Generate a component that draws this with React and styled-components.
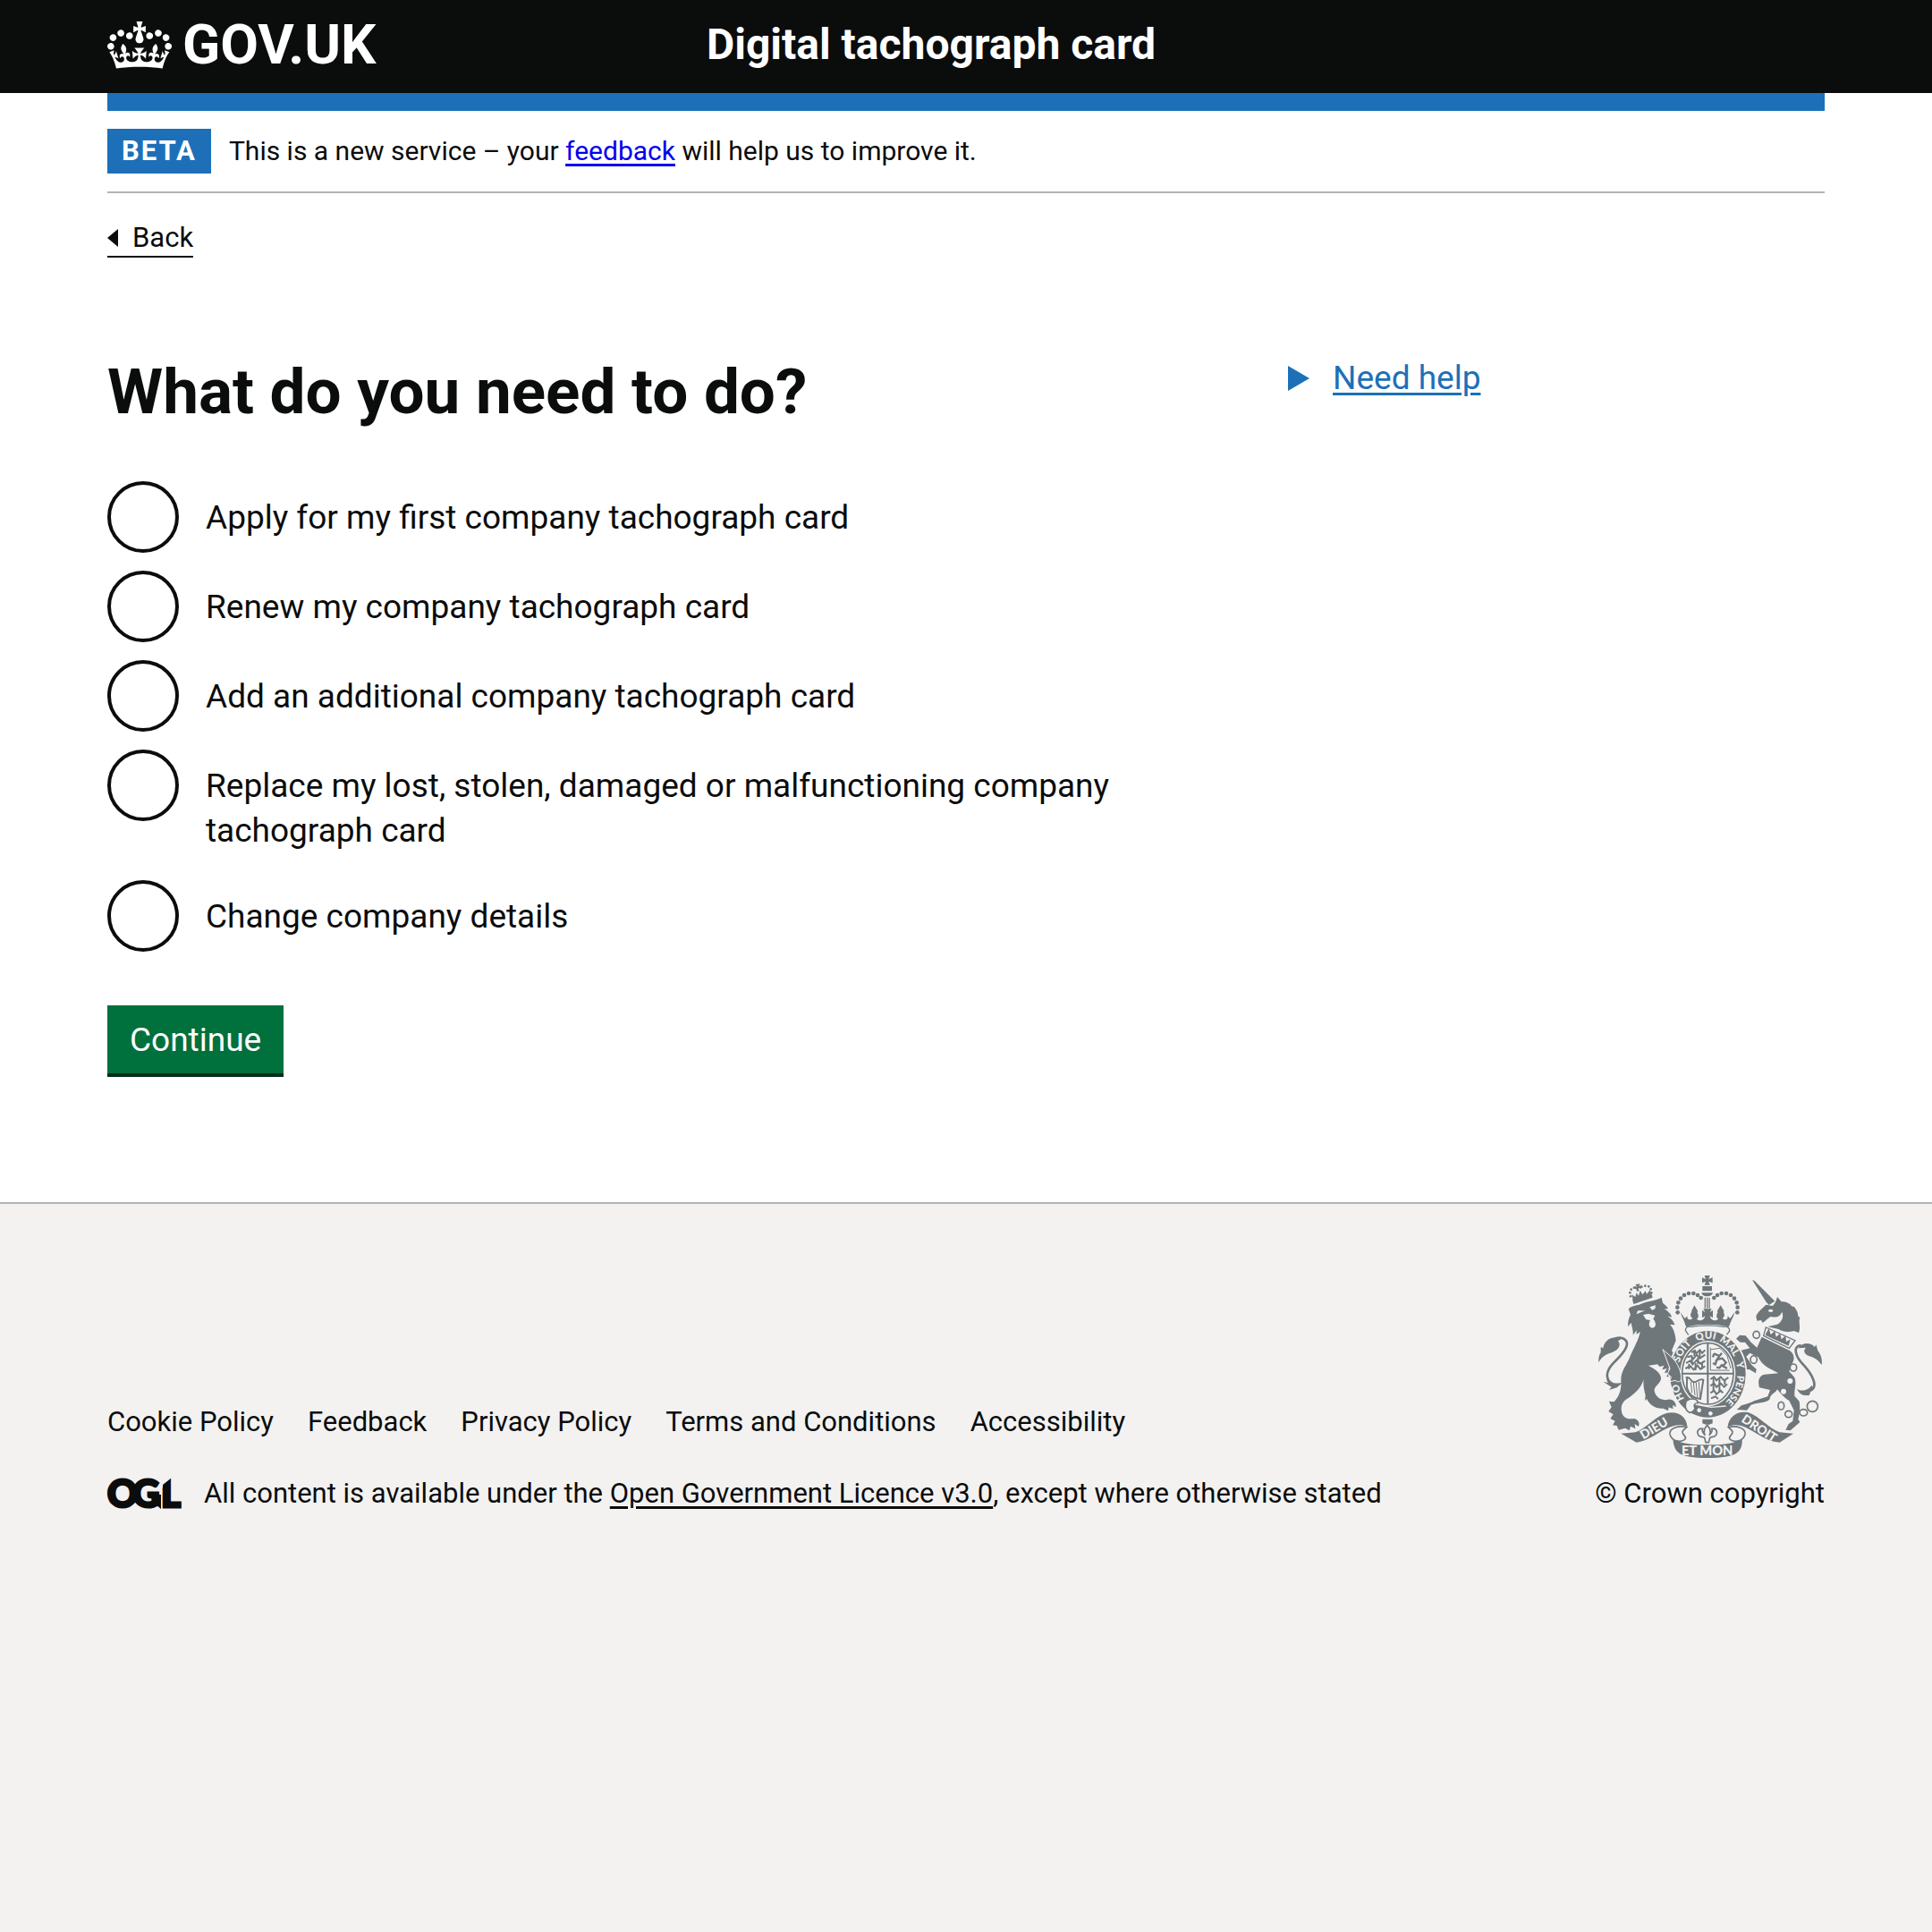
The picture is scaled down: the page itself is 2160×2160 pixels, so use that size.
import React from "react";
import styled, { createGlobalStyle } from "styled-components";

const ink = "#0b0c0c";
const blue = "#1d70b8";
const rule = "#b1b4b6";
const footerGrey = "#f3f2f1";
const armsGrey = "#6f777b";

const GlobalStyle = createGlobalStyle`
  *, *::before, *::after { box-sizing: border-box; }
  html { background: ${footerGrey}; }
  body {
    margin: 0;
    background: #fff;
    color: ${ink};
    font-family: Roboto, "Liberation Sans", Arial, sans-serif;
    font-size: 31px;
    line-height: 40px;
  }
`;

const Container = styled.div`
  width: min(100% - 120px, 1920px);
  margin: 0 auto;
`;

const Header = styled.header`
  background: ${ink};
  color: #fff;
`;
const HeaderRow = styled(Container)`
  display: flex;
  align-items: center;
  gap: 30px;
  min-height: 104px;
  padding-bottom: 4px;
`;
const LogoLink = styled.a`
  flex: 0 0 calc(100% / 3);
  display: flex;
  align-items: center;
  gap: 12px;
  color: inherit;
  text-decoration: none;
  font-size: 62px;
  line-height: 60px;
  font-weight: 700;
`;
const ServiceName = styled.a`
  color: inherit;
  text-decoration: none;
  font-size: 48px;
  line-height: 60px;
  font-weight: 700;
`;
const BlueBar = styled.div`
  height: 20px;
  background: ${blue};
`;

const PhaseBanner = styled.div`
  display: flex;
  align-items: center;
  gap: 20px;
  padding: 20px 0;
  border-bottom: 2px solid ${rule};
`;
const Tag = styled.strong`
  padding: 5px 16px;
  background: ${blue};
  color: #fff;
  font-weight: 700;
  letter-spacing: 2px;
`;
const PhaseText = styled.p`
  margin: 0;
  font-size: 30px;
`;
const PhaseLink = styled.a`
  color: #0000ee;
  text-decoration-thickness: 3px;
  text-underline-offset: 4px;
  text-decoration-skip-ink: none;
`;

const BackLink = styled.a`
  display: inline-flex;
  align-items: center;
  gap: 16px;
  margin-top: 30px;
  border-bottom: 2px solid ${ink};
  color: ${ink};
  text-decoration: none;
`;

const Main = styled.main`
  display: grid;
  grid-template-columns: repeat(3, minmax(0, 1fr));
  gap: 60px;
  padding: 110px 0 140px;
`;
const Question = styled.form`
  grid-column: span 2;
`;
const Fieldset = styled.fieldset`
  margin: 0;
  padding: 0;
  border: 0;
`;
const Legend = styled.legend`
  padding: 0;
  margin-bottom: 60px;
`;
const Title = styled.h1`
  margin: 0;
  font-size: 71px;
  line-height: 80px;
  font-weight: 700;
`;
const Options = styled.div`
  display: flex;
  flex-direction: column;
  gap: 20px;
`;
const Option = styled.div`
  display: flex;
  align-items: flex-start;
  gap: 30px;
  max-width: 1160px;
`;
const Radio = styled.input`
  appearance: none;
  flex: none;
  width: 80px;
  height: 80px;
  margin: 0;
  border: 4px solid ${ink};
  border-radius: 50%;
  background: #fff;
  &:checked { box-shadow: inset 0 0 0 16px #fff, inset 0 0 0 40px ${ink}; }
`;
const OptionLabel = styled.label`
  padding: 16px 0 10px;
  font-size: 37px;
  line-height: 50px;
`;
const Submit = styled.button`
  display: block;
  margin-top: 60px;
  padding: 14px 25px 12px;
  border: 0;
  border-bottom: 4px solid #002d18;
  background: #00703c;
  color: #fff;
  font: inherit;
  font-size: 37px;
  line-height: 50px;
`;

const Help = styled.details`
  color: ${blue};
`;
const HelpSummary = styled.summary`
  display: flex;
  align-items: center;
  gap: 26px;
  list-style: none;
  font-size: 37px;
  line-height: 50px;
  cursor: pointer;
  &::-webkit-details-marker { display: none; }
`;
const HelpText = styled.span`
  text-decoration: underline;
  text-decoration-thickness: 3px;
  text-underline-offset: 4px;
`;

const Footer = styled.footer`
  padding: 80px 0 60px;
  border-top: 2px solid ${rule};
  background: ${footerGrey};
`;
const FooterRow = styled(Container)`
  display: flex;
  align-items: flex-end;
  justify-content: space-between;
  gap: 60px;
`;
const FooterLinks = styled.ul`
  display: flex;
  flex-wrap: wrap;
  gap: 20px 38px;
  margin: 0 0 40px;
  padding: 0;
  list-style: none;
`;
const FooterLink = styled.a`
  color: ${ink};
  text-decoration: ${(p) => (p.$underlined ? "underline" : "none")};
  text-decoration-thickness: 3px;
  text-underline-offset: 4px;
`;
const Licence = styled.div`
  display: flex;
  align-items: center;
  gap: 26px;
`;
const Copyright = styled.a`
  display: flex;
  flex-direction: column;
  align-items: center;
  gap: 20px;
  color: ${ink};
  text-decoration: none;
  white-space: nowrap;
`;

function Crown() {
  return (
    <svg width="72" height="53" viewBox="0 0 132 97" aria-hidden="true">
      <path
        fill="currentColor"
        fillRule="evenodd"
        d="M25 30.2c3.5 1.5 7.7-.2 9.1-3.7 1.5-3.6-.2-7.8-3.9-9.2-3.6-1.4-7.6.3-9.1 3.9-1.4 3.5.3 7.5 3.9 9zM9 39.5c3.6 1.5 7.8-.2 9.2-3.7 1.5-3.6-.2-7.8-3.9-9.1-3.6-1.5-7.6.2-9.1 3.8-1.4 3.5.3 7.5 3.8 9zM4.4 57.2c3.5 1.5 7.7-.2 9.1-3.8 1.5-3.6-.2-7.7-3.9-9.1-3.5-1.5-7.6.3-9.1 3.8-1.4 3.5.3 7.6 3.9 9.1zm38.3-21.4c3.5 1.5 7.7-.2 9.1-3.8 1.5-3.6-.2-7.7-3.9-9.1-3.6-1.5-7.6.3-9.1 3.8-1.3 3.6.4 7.7 3.9 9.1zm64.4-5.6c-3.6 1.5-7.8-.2-9.1-3.7-1.5-3.6.2-7.8 3.8-9.2 3.6-1.4 7.7.3 9.2 3.9 1.3 3.5-.4 7.5-3.9 9zm15.9 9.3c-3.6 1.5-7.7-.2-9.1-3.7-1.5-3.6.2-7.8 3.7-9.1 3.6-1.5 7.7.2 9.2 3.8 1.5 3.5-.3 7.5-3.8 9zm4.7 17.7c-3.6 1.5-7.8-.2-9.2-3.8-1.5-3.6.2-7.7 3.9-9.1 3.6-1.5 7.7.3 9.2 3.8 1.3 3.5-.4 7.6-3.9 9.1zM89.3 35.8c-3.6 1.5-7.8-.2-9.2-3.8-1.4-3.6.2-7.7 3.9-9.1 3.6-1.5 7.7.3 9.2 3.8 1.4 3.6-.3 7.7-3.9 9.1zM69.7 17.7l8.9 4.7V9.3l-8.9 2.8c-.2-.3-.5-.6-.9-.9L72.4 0H59.6l3.5 11.2c-.3.3-.6.5-.9.9l-8.8-2.8v13.1l8.8-4.7c.3.3.6.7.9.9l-5 15.4v.1c-.2.8-.4 1.6-.4 2.4 0 4.1 3.1 7.5 7 8.1h.2c.3 0 .7.1 1 .1.4 0 .7 0 1-.1h.2c4-.6 7.1-4.1 7.1-8.1 0-.8-.1-1.7-.4-2.4V34l-5.1-15.4c.4-.2.7-.6 1-.9zM66 92.8c16.9 0 32.8 1.1 47.1 3.2 4-16.9 8.9-26.7 14-33.5l-9.6-3.4c1 4.9 1.1 7.2 0 10.2-1.5-1.4-3-4.3-4.2-8.7L108.6 76c2.8-2 5-3.2 7.5-3.3-4.4 9.4-10 11.9-13.6 11.2-4.3-.8-6.3-4.6-5.6-7.9 1-4.7 5.7-5.9 8-.5 4.3-8.7-3-11.4-7.6-8.8 7.1-7.2 7.9-13.5 2.1-21.1-8 6.1-8.1 12.3-4.5 20.8-4.7-5.4-12.1-2.5-9.5 6.2 3.4-5.2 7.9-2 7.2 3.1-.6 4.3-6.4 7.8-13.5 7.2-10.3-.9-10.9-8-11.2-13.8 2.5-.5 7.1 1.8 11 7.3L80.2 60c-4.1 4.4-8 5.3-12.3 5.4 1.4-4.4 8-11.6 8-11.6H55.5s6.4 7.2 7.9 11.6c-4.2-.1-8-1-12.3-5.4l1.4 16.4c3.9-5.5 8.5-7.7 10.9-7.3-.3 5.8-.9 12.8-11.1 13.8-7.2.6-12.9-2.9-13.5-7.2-.7-5 3.8-8.3 7.1-3.1 2.7-8.7-4.6-11.6-9.4-6.2 3.7-8.5 3.6-14.7-4.6-20.8-5.8 7.6-5 13.9 2.2 21.1-4.7-2.6-11.9.1-7.7 8.8 2.3-5.5 7.1-4.2 8.1.5.7 3.3-1.3 7.1-5.7 7.9-3.5.7-9-1.8-13.5-11.2 2.5.1 4.7 1.3 7.5 3.3l-4.7-15.4c-1.2 4.4-2.7 7.2-4.3 8.7-1.1-3-.9-5.3 0-10.2l-9.5 3.4c5 6.9 9.9 16.7 14 33.5 14.8-2.1 30.8-3.2 47.7-3.2z"
      />
    </svg>
  );
}

function OglLogo() {
  return (
    <svg width="82" height="34" viewBox="0 0 82 34" overflow="visible" role="img" aria-label="Open Government Licence">
      <text
        x="0 28 60"
        y="32"
        fontFamily="Lato, sans-serif"
        fontWeight="900"
        fontSize="42"
        fill={ink}
        stroke={ink}
        strokeWidth="3"
      >
        OGL
      </text>
      <path d="M61-1H72L62 7V10H61Z" fill={footerGrey} />
      <path d="M48 18H60V34L54 29Z" fill={ink} />
    </svg>
  );
}

const crownPearls = [
  [338, 172], [337, 155], [340, 139], [348, 125], [360, 114], [375, 108], [391, 108], [405, 114], [416, 123],
];
const smallPearls = [
  [180, 118], [178, 106], [182, 95], [192, 89], [202, 92], [217, 86], [229, 83], [241, 85], [248, 94], [250, 106],
];
const spots = [
  [715, 402, 9], [693, 437, 9],
];
const bubbles = [
  [602, 247, 11, 12], [593, 330, 11, 13], [726, 357, 11, 12], [685, 485, 10, 13], [710, 513, 12, 11], [760, 508, 13, 11], [790, 487, 18, 18],
];

function RoyalArms() {
  return (
    <svg width="250" height="204" viewBox="72 48 750 612" fill={armsGrey} role="img" aria-label="Royal coat of arms">
      <defs>
        <path id="garter-top" d="M339 378 A100 118 0 0 1 539 378" />
        <path id="garter-right" d="M537 366 A98 114 0 0 1 484 482" />
        <path id="garter-left" d="M372 476 A98 114 0 0 1 340 396" />
      </defs>

      {/* lion's tail */}
      <path d="M135 420C92 404 92 372 126 338C164 302 184 270 152 258C134 254 118 262 106 276" fill="none" stroke={armsGrey} strokeWidth="8" />
      <path d="M148 262C120 248 92 264 88 292L80 288L80 306C74 314 72 326 73 340C84 318 100 312 118 306C140 298 150 282 138 268Z" />
      <path d="M88 404L104 408L98 392C110 408 130 412 152 408L134 424L108 432L116 422Z" />

      {/* lion's crown */}
      <g>
        {smallPearls.map(([x, y]) => (
          <circle key={`${x}-${y}`} cx={x} cy={y} r="4" />
        ))}
        <path d="M186 128L250 108L254 122L190 144Z" />
        <path d="M188 130L184 112L196 120L200 106L207 116L212 98L220 112L230 100L234 110L246 96L248 116Z" />
        <path d="M196 78L212 76L208 84L216 82L216 92L206 90L208 100L200 102L203 91L195 94L194 84L202 86Z" />
      </g>

      {/* lion */}
      <path d="M173 160C186 148 200 150 214 144C240 132 262 134 284 122L288 140C298 148 304 154 306 160L294 160C304 168 316 176 318 188L304 184C314 192 326 202 328 214L312 212C322 222 330 240 332 266L318 300C332 318 344 348 348 380C356 396 346 408 332 404L318 410L322 398L308 402L312 388L300 388L308 374L294 374L302 360L286 364L292 350L278 354L270 346L240 350C266 364 284 378 282 396C278 412 258 420 260 436C264 456 284 470 306 464C322 462 334 474 332 490L322 482L322 496L308 490L306 502L290 494C264 496 244 482 234 462L228 468L230 450C224 430 222 410 224 396C216 424 196 444 168 462C148 474 146 496 152 512C160 530 178 530 194 528C208 534 212 546 206 554L194 546L196 562L180 554L176 568L162 560L140 566L134 552L120 550L128 536L112 528L122 514L106 504L116 490L108 470L124 472C136 460 150 440 148 404C146 366 168 350 180 316C190 290 208 264 212 236L200 246L200 232L188 248C190 232 184 222 182 206L172 220C170 204 174 190 180 180Z" />
      <g fill={footerGrey}>
        <path d="M200 178L228 166L204 166ZM244 154L264 148L262 160L252 164Z" />
        <path d="M222 180L240 176L262 182L256 194C266 204 268 222 252 224C238 220 242 206 246 198L232 196Z" />
      </g>

      {/* unicorn's tail */}
      <path d="M780 436C812 424 792 384 762 350C730 318 724 284 752 282" fill="none" stroke={armsGrey} strokeWidth="8" />
      <path d="M742 292C758 270 784 272 798 288L802 280L808 300C818 312 824 330 821 348C810 332 796 322 778 318C762 312 758 300 768 290Z" />
      <path d="M738 428C754 440 776 432 788 416L794 430L782 434C784 446 780 452 772 450C756 452 744 442 738 428Z" />

      {/* unicorn */}
      <path d="M588 63L596 66L664 134L644 147L634 136Z" />
      <path d="M601 186C604 172 620 160 634 146L656 150C664 144 668 134 672 120L686 136C704 136 714 142 722 152L728 152C736 162 742 172 742 184L748 190C742 204 752 222 744 240L728 234C706 240 690 236 676 228L640 220L672 212C690 202 694 184 688 170C680 188 668 190 650 186C640 190 632 204 622 206L618 198L604 200Z" />
      <ellipse cx="650" cy="166" rx="8" ry="5" fill={footerGrey} />
      <path d="M634 222L732 266L712 292L626 250Z" fill={footerGrey} stroke={armsGrey} strokeWidth="4" />
      <path d="M634 242L644 226L650 246L664 234L668 254L682 242L686 262L700 250L702 270L716 262L710 284L632 248Z" />
      <path d="M620 254L714 300C730 312 732 330 720 346L712 370L730 390C738 410 728 430 730 452L746 470C750 496 746 516 742 530L748 540L716 568L700 566L710 546L724 536L728 500L712 468C692 456 686 446 672 430C664 446 652 440 646 464C634 476 600 474 584 482L570 500L536 498L552 484C570 478 584 474 596 468L640 454L648 432L612 424C606 404 610 384 628 380L676 376L650 362C628 352 616 338 608 322L580 308L568 320L586 348L602 362L600 376L580 364L564 362L560 340L546 316L548 300L580 292L564 272L548 272L534 260L546 248L566 250L584 272L604 290Z" />
      {spots.map(([x, y, r]) => (
        <circle key={x} cx={x} cy={y} r={r} fill={footerGrey} />
      ))}
      {bubbles.map(([x, y, rx, ry]) => (
        <ellipse key={x} cx={x} cy={y} rx={rx} ry={ry} fill={footerGrey} stroke={armsGrey} strokeWidth="5" />
      ))}

      {/* royal crown */}
      <path d="M428 48H446L442 60L455 55V73L442 68L446 80H428L432 68L420 73V55L432 60Z" />
      <path d="M421 84H453V100H421ZM418 106H456C454 122 420 122 418 106Z" />
      <path d="M430 122V158M437 122V158M444 122V158" stroke={armsGrey} strokeWidth="4" />
      {crownPearls.map(([x, y]) => (
        <g key={`${x}-${y}`}>
          <circle cx={x} cy={y} r="7" />
          <circle cx={876 - x} cy={y} r="7" />
        </g>
      ))}
      <path d="M346 170L362 192L374 180C364 186 374 204 388 192C372 180 390 168 384 168L394 148L406 168C398 170 416 184 402 194C416 204 428 196 430 184L420 190V164L430 172L424 160H452L446 172L456 164V190L446 184C448 196 460 204 474 194C460 184 478 170 470 168L482 148L494 168C486 170 504 180 488 192C502 204 512 186 502 180L514 192L530 170C524 190 514 204 510 220C460 210 416 210 366 220C362 204 354 190 346 170Z" />
      <path d="M364 232C364 220 372 218 384 220C420 214 456 214 492 220C504 218 512 222 512 234L500 250L376 250Z" fill={footerGrey} stroke={armsGrey} strokeWidth="4" />

      {/* garter */}
      <ellipse cx="439" cy="378" rx="132" ry="150" fill={footerGrey} />
      <ellipse cx="439" cy="379" rx="127" ry="145" />
      <ellipse cx="439" cy="377" rx="93" ry="110" fill={footerGrey} />
      <ellipse cx="439" cy="377" rx="86" ry="103" fill="none" stroke={armsGrey} strokeWidth="5" />
      <path d="M439 276V478M352 377H526" stroke={armsGrey} strokeWidth="6" />
      <g fill="none" stroke={armsGrey} strokeWidth="6">
        <path d="M384 306L396 300L400 310L412 298L420 308L430 298M370 322L384 318L390 328L402 314L412 326L430 314M366 342L380 334L388 346L402 332L414 344L430 334M364 360L380 352L392 364L404 350L414 362L430 352" />
        <path d="M394 302V318M412 300V322M386 322V342M406 324V344M376 344V362M398 342V366M420 340V362" />
        <path d="M448 290V366H512M450 296L480 292L504 318L516 360" strokeWidth="3" />
        <path d="M460 310L478 318L470 330L488 326L500 340L490 352L504 360M460 310L456 322M478 318L486 308M470 330L464 346L456 342M488 346L478 358L468 356" strokeWidth="7" />
        <path d="M448 396L460 388L468 400L482 388L494 400L508 390M448 418L460 410L468 422L482 410L494 422L504 412M448 442L460 434L468 446L482 434L490 442M450 460L464 454L474 462" />
        <path d="M458 392V412M478 392V416M496 396V414M458 414V438M478 416V438" />
        <path d="M368 390C372 404 366 414 370 428C376 446 390 460 414 462L424 398C410 390 400 412 388 404C378 398 380 388 368 390Z" />
        <path d="M382 406L386 442M391 408L396 450M400 408L404 456M409 404L412 458" strokeWidth="3" />
      </g>
      <g fill={footerGrey} fontFamily="Lato, sans-serif" fontWeight="900" fontSize="34" textAnchor="middle">
        <text><textPath href="#garter-top" startOffset="22%">SOIT</textPath></text>
        <text><textPath href="#garter-top" startOffset="48%">QUI</textPath></text>
        <text><textPath href="#garter-top" startOffset="72%">MAL</textPath></text>
        <text><textPath href="#garter-top" startOffset="92%">Y</textPath></text>
        <text fontSize="32"><textPath href="#garter-right" startOffset="50%">PENSE</textPath></text>
        <text><textPath href="#garter-left" startOffset="52%">HO</textPath></text>
      </g>
      <path d="M366 470C384 456 410 462 404 478C396 476 392 482 394 488C400 494 392 506 378 508C362 500 362 484 366 470Z" fill={footerGrey} stroke={armsGrey} strokeWidth="5" />
      <path d="M398 480L450 490L500 486" fill="none" stroke={footerGrey} strokeWidth="4" />
      <circle cx="410" cy="500" r="7" fill={footerGrey} />
      <circle cx="448" cy="511" r="7" fill={footerGrey} />

      {/* lion's paw over the garter */}
      <path d="M288 296L322 326C340 346 350 372 350 392C350 404 340 408 330 400L312 404L316 388L304 378L312 360Z" stroke={footerGrey} strokeWidth="3" />

      {/* fleur-de-lis */}
      <path d="M421 530H455V544L444 548H432L421 544Z" />
      <path d="M437 550C448 562 450 574 444 584C450 576 458 570 452 562C466 558 474 572 466 584C460 592 448 588 446 592L442 608H432L428 592C426 588 414 592 408 584C400 572 408 558 422 562C416 570 424 576 430 584C424 574 426 562 437 550Z" fill={footerGrey} stroke={armsGrey} strokeWidth="5" />

      {/* motto ribbon */}
      <path d="M148 578L196 574C232 562 262 520 300 510C342 500 370 526 370 556C344 544 322 552 300 562C264 580 236 604 200 608Z" />
      <path d="M726 578L680 574C644 562 612 520 576 508C534 500 508 526 506 556C532 544 556 552 578 564C612 582 640 606 680 608Z" />
      <path d="M366 556C340 552 308 558 312 582C320 604 344 610 362 598C372 588 352 584 354 572C358 562 366 562 370 554" fill={footerGrey} stroke={armsGrey} strokeWidth="5" />
      <path d="M510 556C536 552 568 558 564 582C556 604 532 610 514 598C504 588 524 584 522 572C518 562 510 562 506 554" fill={footerGrey} stroke={armsGrey} strokeWidth="5" />
      <path d="M322 596C350 614 400 616 438 616C476 616 526 614 554 596C556 640 536 660 438 660C340 660 326 640 322 596Z" />
      <g fill={footerGrey} fontFamily="Lato, sans-serif" fontWeight="900" textAnchor="middle">
        <text x="437" y="651" fontSize="44">ET MON</text>
        <text transform="translate(266 573) rotate(-31)" fontSize="42">DIEU</text>
        <text transform="translate(604 573) rotate(33)" fontSize="42">DROIT</text>
      </g>
    </svg>
  );
}

const options = [
  ["first", "Apply for my first company tachograph card"],
  ["renew", "Renew my company tachograph card"],
  ["additional", "Add an additional company tachograph card"],
  ["replace", "Replace my lost, stolen, damaged or malfunctioning company tachograph card"],
  ["details", "Change company details"],
];

const footerLinks = ["Cookie Policy", "Feedback", "Privacy Policy", "Terms and Conditions", "Accessibility"];

export default function App() {
  return (
    <>
      <GlobalStyle />
      <Header>
        <HeaderRow>
          <LogoLink href="#">
            <Crown />
            GOV.UK
          </LogoLink>
          <ServiceName href="#">Digital tachograph card</ServiceName>
        </HeaderRow>
      </Header>

      <Container>
        <BlueBar />
        <PhaseBanner>
          <Tag>BETA</Tag>
          <PhaseText>
            This is a new service – your <PhaseLink href="#">feedback</PhaseLink> will help us to improve it.
          </PhaseText>
        </PhaseBanner>
        <BackLink href="#">
          <svg width="12" height="20" viewBox="0 0 12 20" aria-hidden="true">
            <path d="M0 10L12 0V20Z" fill="currentColor" />
          </svg>
          Back
        </BackLink>

        <Main>
          <Question onSubmit={(event) => event.preventDefault()}>
            <Fieldset>
              <Legend>
                <Title>What do you need to do?</Title>
              </Legend>
              <Options>
                {options.map(([value, label]) => (
                  <Option key={value}>
                    <Radio type="radio" name="task" id={value} value={value} />
                    <OptionLabel htmlFor={value}>{label}</OptionLabel>
                  </Option>
                ))}
              </Options>
            </Fieldset>
            <Submit type="submit">Continue</Submit>
          </Question>
          <Help>
            <HelpSummary>
              <svg width="24" height="28" viewBox="0 0 24 28" aria-hidden="true">
                <path d="M0 0L24 14L0 28Z" fill="currentColor" />
              </svg>
              <HelpText>Need help</HelpText>
            </HelpSummary>
          </Help>
        </Main>
      </Container>

      <Footer>
        <FooterRow>
          <div>
            <FooterLinks>
              {footerLinks.map((text) => (
                <li key={text}>
                  <FooterLink href="#">{text}</FooterLink>
                </li>
              ))}
            </FooterLinks>
            <Licence>
              <OglLogo />
              <span>
                All content is available under the{" "}
                <FooterLink href="#" $underlined>Open Government Licence v3.0</FooterLink>, except where otherwise stated
              </span>
            </Licence>
          </div>
          <Copyright href="#">
            <RoyalArms />
            © Crown copyright
          </Copyright>
        </FooterRow>
      </Footer>
    </>
  );
}
